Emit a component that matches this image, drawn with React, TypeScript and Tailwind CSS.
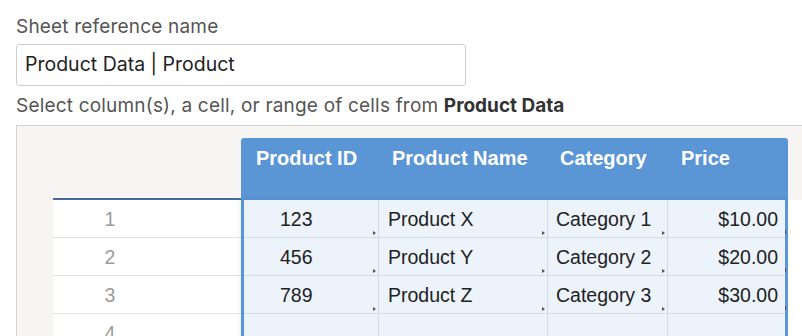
import React from "react";

const rows = [
  { n: 1, id: "123", name: "Product X", cat: "Category 1", price: "$10.00" },
  { n: 2, id: "456", name: "Product Y", cat: "Category 2", price: "$20.00" },
  { n: 3, id: "789", name: "Product Z", cat: "Category 3", price: "$30.00" },
  { n: 4, id: "", name: "", cat: "", price: "" },
];

function Tri({ show }: { show: boolean }) {
  if (!show) return null;
  return (
    <span className="absolute bottom-[2px] right-[2px] h-0 w-0 border-y-[2px] border-l-[3px] border-y-transparent border-l-[#555]" />
  );
}

export default function App() {
  const sans = { fontFamily: "Inter, 'Noto Sans', sans-serif" };
  const arial = { fontFamily: "'Liberation Sans', Arial, sans-serif" };
  return (
    <div className="h-[336px] w-[802px] overflow-hidden bg-white" style={sans}>
      <div className="pl-[16px] pt-[14px]">
        <div className="text-[19px] leading-[26px] tracking-[0.01em] text-[#555]">Sheet reference name</div>
        <div className="mt-[4px] flex h-[42px] w-[450px] items-center rounded-[3px] border border-[#cdcdcd] px-[8px] text-[19.5px] text-[#222]">
          Product Data | Product
        </div>
        <div className="mt-[7px] text-[19px] leading-[26px] tracking-[0.01em] text-[#555]">
          Select column(s), a cell, or range of cells from{" "}
          <span className="font-bold tracking-normal text-[#333]">Product Data</span>
        </div>
        <div className="mt-[6px] flex w-[800px] border border-[#d4d4d4] bg-[#f6f5f3]" style={arial}>
          <div className="w-[36px] shrink-0" />
          {/* row header column */}
          <div className="w-[188px] shrink-0">
            <div className="h-[74px] border-b-2 border-[#4a65a0]" />
            {rows.map((r) => (
              <div key={r.n} className="flex h-[38px] border-b border-[#e2e2e2] bg-white">
                <div className="w-[114px] pt-[7px] text-center text-[19.5px] leading-[24px] text-[#9b9b9b]">{r.n}</div>
              </div>
            ))}
          </div>
          {/* selection */}
          <div className="w-[547px] shrink-0">
            <div className="h-[12px]" />
            <div className="flex h-[62px] rounded-t-[3px] bg-[#5a96d6] text-[20px] font-bold leading-[24px] text-white">
              <div className="w-[137px] pl-[15px] pt-[8px]">Product ID</div>
              <div className="w-[169px] pl-[14px] pt-[8px]">Product Name</div>
              <div className="w-[120px] pl-[13px] pt-[8px]">Category</div>
              <div className="w-[121px] pl-[14px] pt-[8px]">Price</div>
            </div>
            <div className="border-x-[3px] border-[#5a96d6] bg-[#edf3fb] shadow-[0_0_6px_rgba(0,0,0,0.10)]">
              {rows.map((r) => (
                <div key={r.n} className="flex h-[38px] border-b border-[#d3dbe5] text-[19.5px] leading-[24px] text-[#222]">
                  <div className="relative w-[134px] pl-[36px] pt-[7px]">
                    {r.id}
                    <Tri show={!!r.id} />
                  </div>
                  <div className="relative w-[169px] border-l border-[#d3dbe5] pl-[9px] pt-[7px]">
                    {r.name}
                    <Tri show={!!r.name} />
                  </div>
                  <div className="relative w-[120px] border-l border-[#d3dbe5] pl-[8px] pt-[7px]">
                    {r.cat}
                    <Tri show={!!r.cat} />
                  </div>
                  <div className="relative w-[118px] border-l border-[#d3dbe5] pr-[7px] pt-[7px] text-right">
                    {r.price}
                    {r.price && (
                      <span className="absolute bottom-[3px] right-[-1px] h-[4px] w-[1px] bg-[#555]" />
                    )}
                  </div>
                </div>
              ))}
            </div>
          </div>
          {/* filler */}
          <div className="flex-1">
            <div className="h-[74px]" />
            <div className="h-[200px] bg-white" />
          </div>
        </div>
      </div>
    </div>
  );
}
